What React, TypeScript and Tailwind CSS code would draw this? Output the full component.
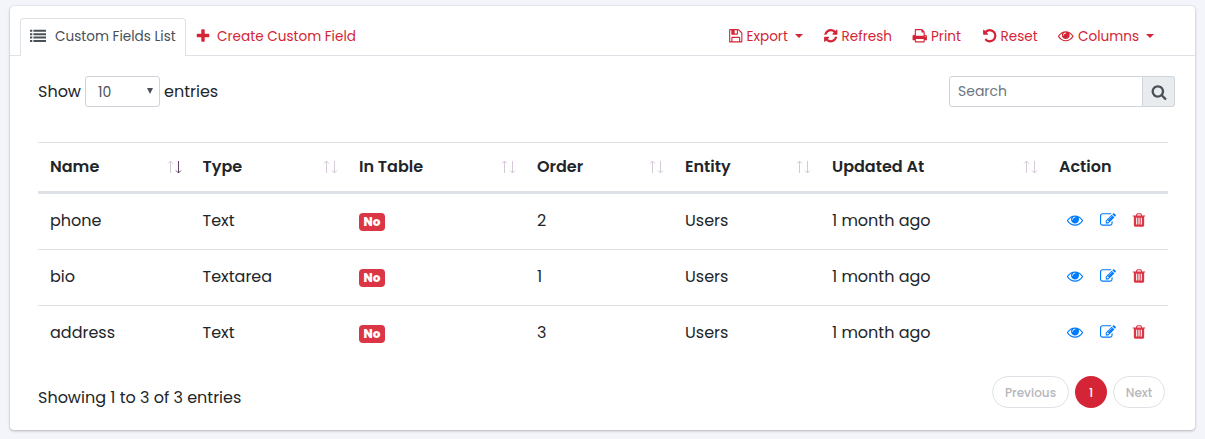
import type { ReactNode } from "react";

const paths = {
  eye: "M1664 960q-152-236-381-353 61 104 61 225 0 185-131.5 316.5t-316.5 131.5-316.5-131.5-131.5-316.5q0-121 61-225-229 117-381 353 133 205 333.5 326.5t434.5 121.5 434.5-121.5 333.5-326.5zm-720-384q0-20-14-34t-34-14q-125 0-214.5 89.5t-89.5 214.5q0 20 14 34t34 14 34-14 14-34q0-86 61-147t147-61q20 0 34-14t14-34zm848 384q0 34-20 69-140 230-376.5 368.5t-499.5 138.5-499.5-139-376.5-368q-20-35-20-69t20-69q140-229 376.5-368t499.5-139 499.5 139 376.5 368q20 35 20 69z",
  refresh: "M1639 1056q0 5-1 7-64 268-268 434.5t-478 166.5q-146 0-282.5-55t-243.5-157l-129 129q-19 19-45 19t-45-19-19-45v-448q0-26 19-45t45-19h448q26 0 45 19t19 45-19 45l-137 137q71 66 161 102t187 36q134 0 250-65t186-179q11-17 53-117 8-23 30-23h192q13 0 22.5 9.5t9.5 22.5zm25-800v448q0 26-19 45t-45 19h-448q-26 0-45-19t-19-45 19-45l138-138q-148-137-349-137-134 0-250 65t-186 179q-11 17-53 117-8 23-30 23h-199q-13 0-22.5-9.5t-9.5-22.5v-7q65-268 270-434.5t480-166.5q146 0 284 55.5t245 156.5l130-129q19-19 45-19t45 19 19 45z",
  print: "M448 1536h896v-256h-896v256zm0-640h896v-384h-160q-40 0-68-28t-28-68v-160h-640v640zm1152 64q0-26-19-45t-45-19-45 19-19 45 19 45 45 19 45-19 19-45zm128 0v416q0 13-9.5 22.5t-22.5 9.5h-224v160q0 40-28 68t-68 28h-960q-40 0-68-28t-28-68v-160h-224q-13 0-22.5-9.5t-9.5-22.5v-416q0-79 56.5-135.5t135.5-56.5h64v-544q0-40 28-68t68-28h672q40 0 88 20t76 48l152 152q28 28 48 76t20 88v256h64q79 0 135.5 56.5t56.5 135.5z",
  save: "M512 1536h768v-384h-768v384zm896 0h128v-896q0-14-10-38.5t-20-34.5l-281-281q-10-10-34-20t-39-10v416q0 40-28 68t-68 28h-576q-40 0-68-28t-28-68v-416h-128v1280h128v-416q0-40 28-68t68-28h832q40 0 68 28t28 68v416zm-384-928v-320q0-13-9.5-22.5t-22.5-9.5h-192q-13 0-22.5 9.5t-9.5 22.5v320q0 13 9.5 22.5t22.5 9.5h192q13 0 22.5-9.5t9.5-22.5zm640 32v928q0 40-28 68t-68 28h-1344q-40 0-68-28t-28-68v-1344q0-40 28-68t68-28h928q40 0 88 20t76 48l280 280q28 28 48 76t20 88z",
  undo: "M1664 896q0 156-61 298t-164 245-245 164-298 61q-172 0-327-72.5t-264-204.5q-7-10-6.5-22.5t8.5-20.5l137-138q10-9 25-9 16 2 23 12 73 95 179 147t225 52q104 0 198.5-40.5t163.5-109.5 109.5-163.5 40.5-198.5-40.5-198.5-109.5-163.5-163.5-109.5-198.5-40.5q-98 0-188 35.5t-160 101.5l137 138q31 30 14 69-17 40-59 40h-448q-26 0-45-19t-19-45v-448q0-42 40-59 39-17 69 14l130 129q107-101 244.5-156.5t284.5-55.5q156 0 298 61t245 164 164 245 61 298z",
  search: "M1216 832q0-185-131.5-316.5t-316.5-131.5-316.5 131.5-131.5 316.5 131.5 316.5 316.5 131.5 316.5-131.5 131.5-316.5zm512 832q0 52-38 90t-90 38q-54 0-90-38l-343-342q-179 124-399 124-143 0-273.5-55.5t-225-150-150-225-55.5-273.5 55.5-273.5 150-225 225-150 273.5-55.5 273.5 55.5 225 150 150 225 55.5 273.5q0 220-124 399l343 343q37 37 37 90z",
  plus: "M1600 736v192q0 40-28 68t-68 28h-416v416q0 40-28 68t-68 28h-192q-40 0-68-28t-28-68v-416h-416q-40 0-68-28t-28-68v-192q0-40 28-68t68-28h416v-416q0-40 28-68t68-28h192q40 0 68 28t28 68v416h416q40 0 68 28t28 68z",
  list: "M0 1344h256v224H0zM0 960h256v224H0zM0 576h256v224H0zM384 1344h1408v224H384zM0 192h256v224H0zM384 960h1408v224H384zM384 576h1408v224H384zM384 192h1408v224H384z",
  edit: "M888 1184l116-116-152-152-116 116v56h96v96h56zm440-720q-16-16-33 1l-350 350q-17 17-1 33t33-1l350-350q17-17 1-33zm80 594v190q0 119-84.5 203.5t-203.5 84.5h-832q-119 0-203.5-84.5t-84.5-203.5v-832q0-119 84.5-203.5t203.5-84.5h832q63 0 117 25 15 7 18 23 3 17-9 29l-49 49q-14 14-32 8-23-6-45-6h-832q-66 0-113 47t-47 113v832q0 66 47 113t113 47h832q66 0 113-47t47-113v-126q0-13 9-22l64-64q15-15 35-7t20 29zm-96-738l288 288-672 672h-288v-288zm444 132l-92 92-288-288 92-92q28-28 68-28t68 28l152 152q28 28 28 68t-28 68z",
  trash: "M704 1376v-704q0-14-9-23t-23-9h-64q-14 0-23 9t-9 23v704q0 14 9 23t23 9h64q14 0 23-9t9-23zm256 0v-704q0-14-9-23t-23-9h-64q-14 0-23 9t-9 23v704q0 14 9 23t23 9h64q14 0 23-9t9-23zm256 0v-704q0-14-9-23t-23-9h-64q-14 0-23 9t-9 23v704q0 14 9 23t23 9h64q14 0 23-9t9-23zm-544-992h448l-48-117q-7-9-17-11h-317q-10 2-17 11zm928 32v64q0 14-9 23t-23 9h-96v948q0 83-47 143.5t-113 60.5h-832q-66 0-113-58.5t-47-141.5v-952h-96q-14 0-23-9t-9-23v-64q0-14 9-23t23-9h309l70-167q15-37 54-63t79-26h320q40 0 79 26t54 63l70 167h309q14 0 23 9t9 23z",
};

function Icon({ name, className = "size-4" }: { name: keyof typeof paths; className?: string }) {
  return (
    <svg viewBox="0 0 1792 1792" fill="currentColor" className={`shrink-0 ${className}`} aria-hidden="true">
      <path d={paths[name]} />
    </svg>
  );
}

function Sort({ active = false }: { active?: boolean }) {
  return (
    <svg viewBox="0 0 16 14" className="h-3.5 w-4 shrink-0" fill="none" aria-hidden="true">
      <path d="M4.5 13V1M2 3.5L4.5 1L7 3.5" stroke="#d5c9d8" />
      <path d="M12.5 1V13M10 10.5L12.5 13L15 10.5" stroke={active ? "#65436b" : "#d5c9d8"} />
    </svg>
  );
}

function Caret() {
  return <span className="h-0 w-0 border-x-4 border-t-4 border-x-transparent border-t-current" />;
}

function Tool({ icon, label, width, caret = false, gap = "ml-[3px]" }: { icon: keyof typeof paths; label: string; width: string; caret?: boolean; gap?: string }) {
  return (
    <button className={`flex h-full shrink-0 items-center text-left ${width}`}>
      <Icon name={icon} className="size-[15.5px] -translate-y-px" />
      <span className={`whitespace-nowrap ${gap}`}>{label}</span>
      {caret && <span className="ml-[7px] flex pb-0.5"><Caret /></span>}
    </button>
  );
}

function Th({ children, active, sortable = true }: { children: ReactNode; active?: boolean; sortable?: boolean }) {
  return (
    <th className="h-[51px] pl-3 pr-[9px] text-left font-semibold">
      <div className="flex items-center justify-between">
        <span className="whitespace-nowrap">{children}</span>
        {sortable && <Sort active={active} />}
      </div>
    </th>
  );
}

const rows = [
  { name: "phone", type: "Text", order: "2" },
  { name: "bio", type: "Textarea", order: "1" },
  { name: "address", type: "Text", order: "3" },
];

export default function App() {
  return (
    <div className="h-[439px] w-[1205px] bg-[#f4f5fa] px-2.5 pt-1.5 font-[Poppins,Inter,sans-serif] text-base leading-6 text-[#212529]">
      <div className="h-[424px] w-[1185px] rounded bg-white shadow-[0_0_1px_rgba(0,0,0,0.2),0_1px_3px_rgba(0,0,0,0.25)]">
        <header className="flex h-[50px] border-b border-[#dee2e6] pl-2.5 pt-3 text-[13.6px] text-[#d32535]">
          <div className="-mb-px flex h-[38px] w-[166px] items-center rounded-t border border-b-0 border-[#dee2e6] bg-white pl-[9px] pb-0.5 text-[#495057]">
            <Icon name="list" className="size-4 -translate-y-px" />
            <span className="ml-[9px] whitespace-nowrap">Custom Fields List</span>
          </div>
          <div className="flex h-[37px] items-center pl-[9px]">
            <Icon name="plus" className="size-4 -translate-y-px" />
            <span className="ml-1.5 whitespace-nowrap">Create Custom Field</span>
          </div>
          <div className="ml-auto flex h-[37px] pr-9">
            <Tool icon="save" label="Export" width="w-[95px]" caret />
            <Tool icon="refresh" label="Refresh" width="w-[89px]" />
            <Tool icon="print" label="Print" width="w-[70px]" gap="ml-[3.5px]" />
            <Tool icon="undo" label="Reset" width="w-[76px]" />
            <Tool icon="eye" label="Columns" width="w-[101px]" gap="ml-[4.5px]" caret />
          </div>
        </header>

        <div className="flex h-[86px] items-start justify-between pl-7 pr-5 pt-5">
          <div className="flex h-[31px] items-center">
            <span className="w-[47px] whitespace-nowrap">Show</span>
            <button className="flex h-[31px] w-[75px] items-center justify-between rounded-[3px] border border-[#ced4da] pl-3 pr-1.5 text-sm text-[#495057]">
              <span>10</span>
              <span className="mb-0.5 h-0 w-0 border-x-[3px] border-t-[6px] border-x-transparent border-t-current" />
            </button>
            <span className="ml-1 whitespace-nowrap">entries</span>
          </div>
          <div className="flex h-[31px] w-[226px]">
            <input aria-label="Search" placeholder="Search" className="w-[194px] rounded-l-[3px] border border-[#ced4da] px-2 pb-0.5 text-sm placeholder:text-[#6c757d]" />
            <button aria-label="Submit search" className="flex w-8 items-center justify-center rounded-r-[3px] border border-l-0 border-[#ced4da] bg-[#e9ecef] text-[#495057]">
              <Icon name="search" />
            </button>
          </div>
        </div>

        <table className="ml-7 w-[1130px] table-fixed border-separate border-spacing-0 border-t border-[#dee2e6]">
          <colgroup>
            <col className="w-[152.5px]" />
            <col className="w-[156.5px]" />
            <col className="w-[178px]" />
            <col className="w-[148px]" />
            <col className="w-[147px]" />
            <col className="w-[227px]" />
            <col className="w-[121px]" />
          </colgroup>
          <thead className="[&_th]:border-b-[3px] [&_th]:border-[#dee2e6]">
            <tr>
              <Th active>Name</Th>
              <Th>Type</Th>
              <Th>In Table</Th>
              <Th>Order</Th>
              <Th>Entity</Th>
              <Th>Updated At</Th>
              <Th sortable={false}>Action</Th>
            </tr>
          </thead>
          <tbody className="[&_td]:h-14 [&_td]:border-b [&_td]:border-[#dee2e6] [&_td]:pl-3 [&_td]:pb-0.5 [&_tr:last-child_td]:border-b-transparent">
            {rows.map((row) => (
              <tr key={row.name}>
                <td>{row.name}</td>
                <td>{row.type}</td>
                <td>
                  <span className="mt-[3px] flex h-[18px] w-[26px] items-center justify-center rounded bg-[#dc3545] text-xs font-extrabold text-white">No</span>
                </td>
                <td>{row.order}</td>
                <td>Users</td>
                <td>1 month ago</td>
                <td>
                  <div className="flex items-center pb-px pl-2 text-[#007bff]">
                    <Icon name="eye" />
                    <Icon name="edit" className="ml-[17px] size-4" />
                    <Icon name="trash" className="ml-[15px] size-4 text-[#dc3545]" />
                  </div>
                </td>
              </tr>
            ))}
          </tbody>
        </table>

        <footer className="flex items-start justify-between pl-7 pr-[30px] pt-3.5">
          <span className="mt-2.5 whitespace-nowrap">Showing 1 to 3 of 3 entries</span>
          <nav className="flex gap-1.5 text-xs font-medium text-[#b5b7bb]">
            <button className="h-8 w-[77px] rounded-full border border-[#dee2e6] pt-0.5">Previous</button>
            <button className="size-8 rounded-full bg-[#d32535] pt-0.5 text-white">1</button>
            <button className="h-8 w-[52px] rounded-full border border-[#dee2e6] pt-0.5">Next</button>
          </nav>
        </footer>
      </div>
    </div>
  );
}
